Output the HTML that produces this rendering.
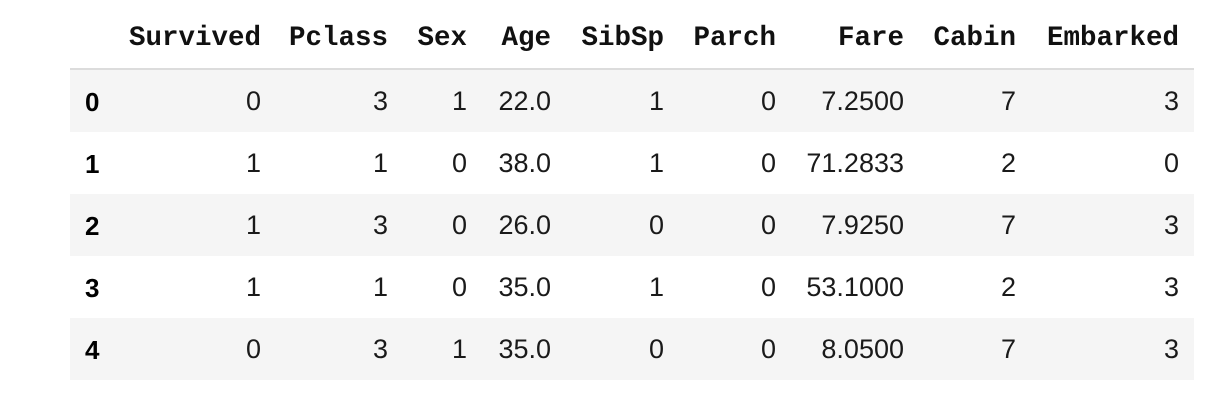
<!DOCTYPE html>
<html><head><meta charset="utf-8"><style>
body{margin:0;width:1216px;height:408px;background:#fff;position:relative;overflow:hidden;color:#000}
.band{position:absolute;left:70px;width:1124px;height:62px;background:#f5f5f5}
.line{position:absolute;left:70px;width:1124px;top:68px;height:2px;background:#dcdcdc}
.h,.d,.i{position:absolute;white-space:nowrap;line-height:1}
.h{font-family:"Liberation Mono",monospace;font-weight:bold;font-size:27.5px;top:25px;color:#111}
.d{font-family:"Liberation Sans",sans-serif;font-size:27px;color:#1a1a1a}
.i{font-family:"Liberation Sans",sans-serif;font-size:26px;font-weight:bold;left:85px}
</style></head><body>
<div class="line"></div>
<div class="band" style="top:70px"></div>
<div class="band" style="top:194px"></div>
<div class="band" style="top:318px"></div>
<div id="c"></div>
<script>
var R=[261,388,467,551,664,776,904,1016,1179];
var H=["Survived","Pclass","Sex","Age","SibSp","Parch","Fare","Cabin","Embarked"];
var D=[["0","3","1","22.0","1","0","7.2500","7","3"],
["1","1","0","38.0","1","0","71.2833","2","0"],
["1","3","0","26.0","0","0","7.9250","7","3"],
["1","1","0","35.0","1","0","53.1000","2","3"],
["0","3","1","35.0","0","0","8.0500","7","3"]];
var s="";
H.forEach(function(h,j){s+='<div class="h" style="right:'+(1216-R[j])+'px">'+h+'</div>';});
D.forEach(function(r,i){var t=88+62*i;
s+='<div class="i" style="top:'+(t+1)+'px">'+i+'</div>';
r.forEach(function(v,j){s+='<div class="d" style="top:'+t+'px;right:'+(1216-R[j])+'px">'+v+'</div>';});});
document.getElementById("c").innerHTML=s;
</script>
</body></html>
